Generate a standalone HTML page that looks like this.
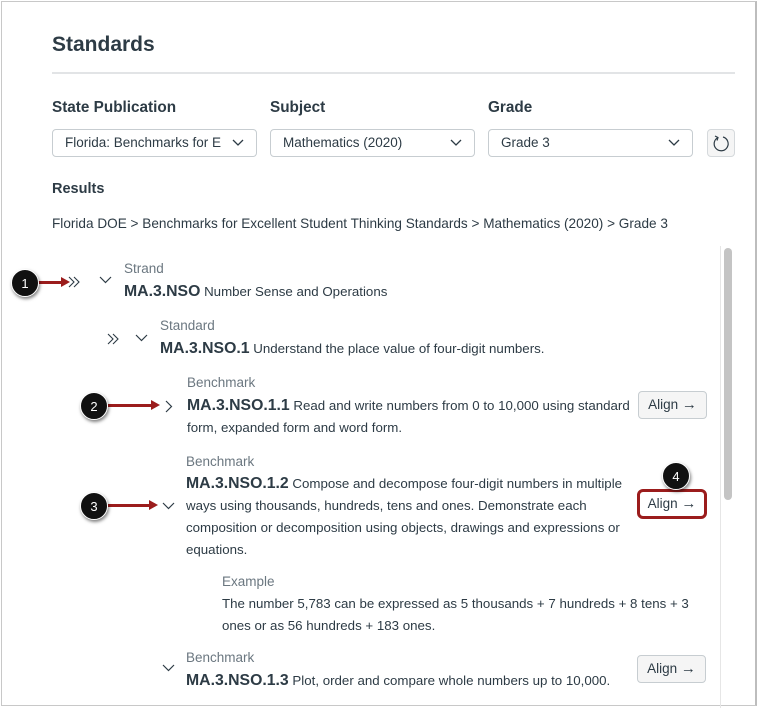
<!DOCTYPE html>
<html><head><meta charset="utf-8"><style>
*{margin:0;padding:0;box-sizing:border-box}
body{width:759px;height:708px;overflow:hidden;background:#fff;font-family:"Liberation Sans",sans-serif;color:#2d3b45;position:relative}
.frame{position:absolute;left:1px;top:1px;width:756px;height:705px;border:1px solid #c8c8c8;border-right:2px solid #bdbdbd}
.a{position:absolute;white-space:nowrap}
.lbl{font-weight:bold;font-size:15.3px}
.sel{position:absolute;top:129px;height:28px;border:1px solid #c7cdd1;border-radius:4px;font-size:13.5px;padding:5px 12px;overflow:hidden;white-space:nowrap}
.sel svg{position:absolute;right:12px;top:9px}
.gray{color:#6b7780;font-size:13.5px}
.t{font-size:13.3px;line-height:22px}
.t b{font-size:15.8px}
.btn{position:absolute;background:#f5f5f5;border:1px solid #c7cdd1;border-radius:4px;font-size:13.5px;text-align:center;line-height:26px;height:28px;width:69px}
.badge{position:absolute;width:28px;height:28px;border-radius:50%;background:#111;color:#fff;font-size:13px;text-align:center;line-height:28px;box-shadow:1px 2px 3px rgba(0,0,0,.5);border:1px solid #fff}
.arr{position:absolute;height:3px;background:#9b1c1c}
.arr:after{content:"";position:absolute;right:-7px;top:-4px;border-left:9px solid #9b1c1c;border-top:5.5px solid transparent;border-bottom:5.5px solid transparent}
</style></head><body>
<div class="frame"></div>
<div class="a" style="left:52px;top:33px;font-size:21px;font-weight:bold">Standards</div>
<div class="a" style="left:52px;top:72px;width:683px;height:2px;background:#e2e4e6"></div>
<div class="a lbl" style="left:52px;top:99px">State Publication</div>
<div class="a lbl" style="left:270px;top:99px">Subject</div>
<div class="a lbl" style="left:488px;top:99px">Grade</div>
<div class="sel" style="left:52px;width:205px;padding-right:40px">Florida: Benchmarks for E<svg width="12" height="8"><path d="M1 1l5 5 5-5" stroke="#2d3b45" fill="none" stroke-width="1.3"/></svg></div>
<div class="sel" style="left:270px;width:205px">Mathematics (2020)<svg width="12" height="8"><path d="M1 1l5 5 5-5" stroke="#2d3b45" fill="none" stroke-width="1.3"/></svg></div>
<div class="sel" style="left:488px;width:205px">Grade 3<svg width="12" height="8"><path d="M1 1l5 5 5-5" stroke="#2d3b45" fill="none" stroke-width="1.3"/></svg></div>
<div class="a" style="left:707px;top:129px;width:28px;height:28px;background:#f5f5f5;border:1px solid #d5d9dc;border-radius:4px"><svg width="26" height="26" style="position:absolute;left:0;top:0"><path d="M10 7.5A7 7 0 1 0 15 7" stroke="#2d3b45" fill="none" stroke-width="1.2"/><path d="M7 6l3 1.5-1 3" stroke="#2d3b45" fill="none" stroke-width="1.2"/></svg></div>
<div class="a" style="left:52px;top:181px;font-size:14.5px;font-weight:bold">Results</div>
<div class="a" style="left:52px;top:216px;font-size:13.6px">Florida DOE &gt; Benchmarks for Excellent Student Thinking Standards &gt; Mathematics (2020) &gt; Grade 3</div>
<div class="a" style="left:720px;top:246px;width:1px;height:462px;background:#e6e6e6"></div>
<div class="a" style="left:724px;top:248px;width:8px;height:252px;border-radius:4px;background:#c4c4c4"></div>

<svg class="a" style="left:68px;top:276px" width="14" height="12"><path d="M1 1l5 5-5 5M6 1l5 5-5 5" stroke="#2d3b45" fill="none" stroke-width="1.1"/></svg>
<svg class="a" style="left:99px;top:276px" width="13" height="8"><path d="M1 1l5.5 5.5L12 1" stroke="#2d3b45" fill="none" stroke-width="1.2"/></svg>
<div class="a gray" style="left:124px;top:261px">Strand</div>
<div class="a t" style="left:124px;top:281px"><b>MA.3.NSO</b> Number Sense and Operations</div>

<svg class="a" style="left:107px;top:333px" width="14" height="12"><path d="M1 1l5 5-5 5M6 1l5 5-5 5" stroke="#2d3b45" fill="none" stroke-width="1.1"/></svg>
<svg class="a" style="left:135px;top:334px" width="13" height="8"><path d="M1 1l5.5 5.5L12 1" stroke="#2d3b45" fill="none" stroke-width="1.2"/></svg>
<div class="a gray" style="left:160px;top:318px">Standard</div>
<div class="a t" style="left:160px;top:338px"><b>MA.3.NSO.1</b> Understand the place value of four-digit numbers.</div>

<svg class="a" style="left:165px;top:400px" width="8" height="13"><path d="M1 1l5.5 5.5L1 12" stroke="#2d3b45" fill="none" stroke-width="1.2"/></svg>
<div class="a gray" style="left:187px;top:375px">Benchmark</div>
<div class="a t" style="left:187px;top:395px"><b>MA.3.NSO.1.1</b> Read and write numbers from 0 to 10,000 using standard<br>form, expanded form and word form.</div>
<div class="btn" style="left:638px;top:391px">Align <span style="font-size:15px">→</span></div>

<svg class="a" style="left:162px;top:502px" width="13" height="8"><path d="M1 1l5.5 5.5L12 1" stroke="#2d3b45" fill="none" stroke-width="1.2"/></svg>
<div class="a gray" style="left:186px;top:454px">Benchmark</div>
<div class="a t" style="left:186px;top:473px"><b>MA.3.NSO.1.2</b> Compose and decompose four-digit numbers in multiple<br>ways using thousands, hundreds, tens and ones. Demonstrate each<br>composition or decomposition using objects, drawings and expressions or<br>equations.</div>
<div class="btn" style="left:637px;top:489px;height:30px;width:70px;background:#fff;border:3px solid #9b1c1c;border-radius:6px;line-height:24px">Align <span style="font-size:15px">→</span></div>

<div class="a gray" style="left:222px;top:574px">Example</div>
<div class="a t" style="left:222px;top:593px">The number 5,783 can be expressed as 5 thousands + 7 hundreds + 8 tens + 3<br>ones or as 56 hundreds + 183 ones.</div>

<svg class="a" style="left:162px;top:664px" width="13" height="8"><path d="M1 1l5.5 5.5L12 1" stroke="#2d3b45" fill="none" stroke-width="1.2"/></svg>
<div class="a gray" style="left:186px;top:650px">Benchmark</div>
<div class="a t" style="left:186px;top:670px"><b>MA.3.NSO.1.3</b> Plot, order and compare whole numbers up to 10,000.</div>
<div class="btn" style="left:637px;top:655px">Align <span style="font-size:15px">→</span></div>

<div class="arr" style="left:38px;top:281px;width:25px"></div>
<div class="badge" style="left:11px;top:269px">1</div>
<div class="arr" style="left:108px;top:404px;width:45px"></div>
<div class="badge" style="left:80px;top:392px">2</div>
<div class="arr" style="left:108px;top:504px;width:43px"></div>
<div class="badge" style="left:80px;top:492px">3</div>
<div class="badge" style="left:662px;top:462px">4</div>
</body></html>
